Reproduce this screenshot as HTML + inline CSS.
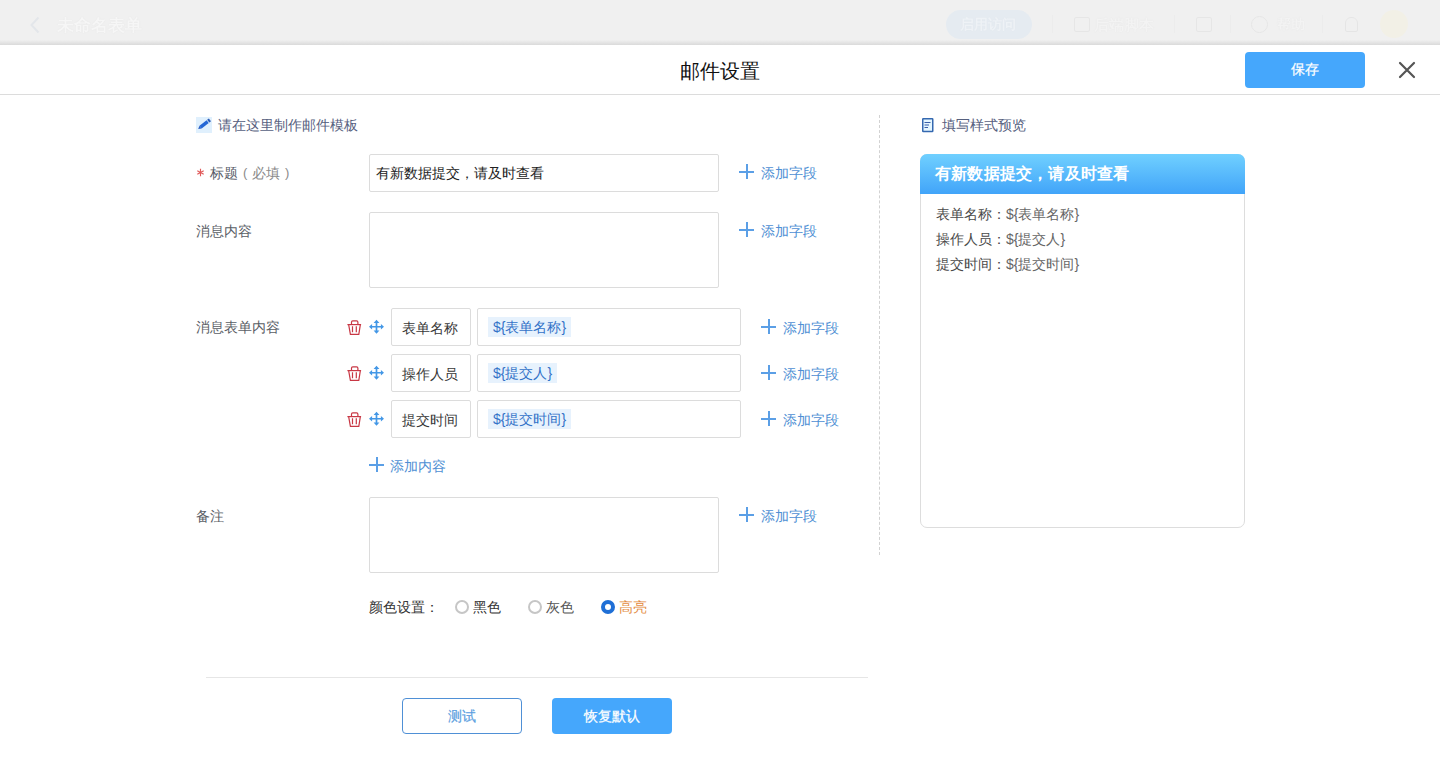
<!DOCTYPE html>
<html><head><meta charset="utf-8">
<style>
*{margin:0;padding:0;box-sizing:border-box}
html,body{width:1440px;height:757px;overflow:hidden;background:#fff;font-family:"Liberation Sans",sans-serif;font-size:14px;color:#333}
.abs{position:absolute}
#topbar{position:absolute;left:0;top:0;width:1440px;height:45px;background:linear-gradient(to bottom,#f0f0f0 0,#f0f0f0 40px,#dadada 45px)}
#hdr{position:absolute;left:0;top:45px;width:1440px;height:50px;background:#fff;border-bottom:1px solid #dcdcdc}
.title{position:absolute;left:0;width:1440px;top:59px;text-align:center;font-size:20px;line-height:24px;color:#111}
.btn-blue{position:absolute;background:#45a7fc;color:#fff;border-radius:4px;text-align:center;font-size:14px;-webkit-text-stroke:0.25px}
.lbl{position:absolute;font-size:14px;line-height:16px;color:#5a5e66}
.inp{position:absolute;border:1px solid #dcdcdc;border-radius:2px;background:#fff}
.add{position:absolute;font-size:14px;line-height:16px;color:#4f8fd4;white-space:nowrap}
.plus{position:absolute;width:15px;height:15px}
.plus:before{content:"";position:absolute;left:7px;top:0;width:2px;height:15px;background:#5b9fe6}
.plus:after{content:"";position:absolute;left:0;top:7px;width:15px;height:2px;background:#5b9fe6}
.tag{position:absolute;background:#e7f2fd;color:#3473c8;font-size:14px;line-height:20px;padding:0 5px;height:20px}
</style></head><body>
<div id="topbar"></div>
<div class="abs" style="left:0;top:0;width:1440px;height:40px;filter:blur(0.7px)">
 <svg class="abs" style="left:29px;top:16px" width="12" height="18" viewBox="0 0 12 18"><path d="M9.5 1.5L2.5 9L9.5 16.5" fill="none" stroke="#e3e6ea" stroke-width="2"/></svg>
 <div class="abs" style="left:57px;top:16px;font-size:17px;line-height:20px;font-weight:bold;color:#f6f6f6;text-shadow:0 0 1px #dedede">未命名表单</div>
 <div class="abs" style="left:946px;top:10px;width:86px;height:29px;border-radius:15px;background:#e5ebf1"></div>
 <div class="abs" style="left:960px;top:16px;font-size:14px;line-height:17px;font-weight:bold;color:#eef2f6;text-shadow:0 0 1px #dde3ea">启用访问</div>
 <div class="abs" style="left:1052px;top:15px;width:1px;height:18px;background:#ececec"></div>
 <div class="abs" style="left:1074px;top:17px;width:16px;height:15px;border:1.5px solid #e6e6e6;border-radius:2px"></div>
 <div class="abs" style="left:1094px;top:16px;font-size:15px;line-height:17px;font-weight:bold;color:#f3f3f3;text-shadow:0 0 1px #e0e0e0">后端脚本</div>
 <div class="abs" style="left:1174px;top:15px;width:1px;height:18px;background:#ececec"></div>
 <div class="abs" style="left:1196px;top:17px;width:16px;height:15px;border:1.5px solid #e6e6e6;border-radius:2px"></div>
 <div class="abs" style="left:1230px;top:15px;width:1px;height:18px;background:#ececec"></div>
 <div class="abs" style="left:1251px;top:16px;width:17px;height:17px;border:1.5px solid #e6e6e6;border-radius:50%"></div>
 <div class="abs" style="left:1277px;top:16px;font-size:14px;line-height:17px;font-weight:bold;color:#f3f3f3;text-shadow:0 0 1px #e0e0e0">帮助</div>
 <div class="abs" style="left:1322px;top:15px;width:1px;height:18px;background:#ececec"></div>
 <div class="abs" style="left:1345px;top:17px;width:13px;height:15px;border:1.5px solid #e5e5e5;border-radius:6px 6px 2px 2px"></div>
 <div class="abs" style="left:1380px;top:10px;width:28px;height:28px;border-radius:50%;background:#f2f0e6"></div>
</div>
<div id="hdr"></div>
<div class="title">邮件设置</div>
<div class="btn-blue" style="left:1245px;top:52px;width:120px;height:36px;line-height:35px">保存</div>
<svg class="abs" style="left:1398px;top:61px" width="18" height="18" viewBox="0 0 18 18"><path d="M2 2L16 16M16 2L2 16" stroke="#555" stroke-width="2.2" stroke-linecap="round"/></svg>

<!-- left header -->
<div class="abs" style="left:196px;top:117px;width:16px;height:16px;background:#e0f0fd"></div>
<svg class="abs" style="left:196px;top:117px" width="16" height="16" viewBox="0 0 16 16"><g transform="translate(2.2 12) rotate(-38)"><path d="M0 0L3 -1.75L3 1.75Z" fill="#2a5fc4"/><rect x="3" y="-1.75" width="9" height="3.5" fill="#2568d6"/><rect x="12.7" y="-1.75" width="2.2" height="3.5" fill="#2a5db8"/></g></svg>
<div class="lbl" style="left:218px;top:117px;color:#56607e">请在这里制作邮件模板</div>

<svg class="abs" style="left:196px;top:168px" width="9" height="9" viewBox="0 0 9 9"><path d="M4.5 0.8V8.2M1.3 2.65L7.7 6.35M1.3 6.35L7.7 2.65" stroke="#e05a5a" stroke-width="1.15"/></svg>
<div class="lbl" style="left:210px;top:165px;color:#555a66">标题</div>
<div class="lbl" style="left:243px;top:165px;color:#8a8a8a;font-size:13px">(</div>
<div class="lbl" style="left:252px;top:165px;color:#8a8a8a">必填</div>
<div class="lbl" style="left:285px;top:165px;color:#8a8a8a;font-size:13px">)</div>
<div class="inp" style="left:369px;top:154px;width:350px;height:38px"></div>
<div class="abs" style="left:376px;top:165px;font-size:14px;line-height:16px;color:#222">有新数据提交，请及时查看</div>
<div class="plus" style="left:739px;top:164px"></div><div class="add" style="left:761px;top:165px">添加字段</div>

<div class="lbl" style="left:196px;top:223px">消息内容</div>
<div class="inp" style="left:369px;top:212px;width:350px;height:76px"></div>
<div class="plus" style="left:739px;top:222px"></div><div class="add" style="left:761px;top:223px">添加字段</div>

<div class="lbl" style="left:196px;top:319px">消息表单内容</div>
<!-- rows -->
<svg class="abs" style="left:346px;top:320px" width="16" height="16" viewBox="0 0 16 16" fill="none" stroke="#c83744" stroke-width="1.2"><path d="M1.4 4.6H15.1"/><path d="M5.5 4.6V2.2Q5.5 0.9 6.8 0.9H10.6Q11.9 0.9 11.9 2.2V4.6"/><path d="M2.7 4.9L4.4 14.4H12.8L14.3 4.9"/><path d="M6.5 6.3V12.3M10.3 6.3V12.3"/></svg><svg class="abs" style="left:368px;top:319px" width="17" height="17" viewBox="0 0 17 17"><path d="M8.5 3V12.7M3.5 7.75H13.5" stroke="#4397e6" stroke-width="1.7"/><path d="M8.5 0.8L11.4 3.9H5.6Z M8.5 14.7L11.4 11.6H5.6Z M1 7.75L4.1 4.9V10.6Z M16 7.75L12.9 4.9V10.6Z" fill="#4397e6"/></svg>
<div class="inp" style="left:391px;top:308px;width:80px;height:38px"></div>
<div class="lbl" style="left:402px;top:320px;color:#383838">表单名称</div>
<div class="inp" style="left:477px;top:308px;width:264px;height:38px"></div>
<div class="tag" style="left:488px;top:317px">${表单名称}</div>
<div class="plus" style="left:761px;top:319px"></div><div class="add" style="left:783px;top:320px">添加字段</div>

<svg class="abs" style="left:346px;top:366px" width="16" height="16" viewBox="0 0 16 16" fill="none" stroke="#c83744" stroke-width="1.2"><path d="M1.4 4.6H15.1"/><path d="M5.5 4.6V2.2Q5.5 0.9 6.8 0.9H10.6Q11.9 0.9 11.9 2.2V4.6"/><path d="M2.7 4.9L4.4 14.4H12.8L14.3 4.9"/><path d="M6.5 6.3V12.3M10.3 6.3V12.3"/></svg><svg class="abs" style="left:368px;top:365px" width="17" height="17" viewBox="0 0 17 17"><path d="M8.5 3V12.7M3.5 7.75H13.5" stroke="#4397e6" stroke-width="1.7"/><path d="M8.5 0.8L11.4 3.9H5.6Z M8.5 14.7L11.4 11.6H5.6Z M1 7.75L4.1 4.9V10.6Z M16 7.75L12.9 4.9V10.6Z" fill="#4397e6"/></svg>
<div class="inp" style="left:391px;top:354px;width:80px;height:38px"></div>
<div class="lbl" style="left:402px;top:366px;color:#383838">操作人员</div>
<div class="inp" style="left:477px;top:354px;width:264px;height:38px"></div>
<div class="tag" style="left:488px;top:363px">${提交人}</div>
<div class="plus" style="left:761px;top:365px"></div><div class="add" style="left:783px;top:366px">添加字段</div>

<svg class="abs" style="left:346px;top:412px" width="16" height="16" viewBox="0 0 16 16" fill="none" stroke="#c83744" stroke-width="1.2"><path d="M1.4 4.6H15.1"/><path d="M5.5 4.6V2.2Q5.5 0.9 6.8 0.9H10.6Q11.9 0.9 11.9 2.2V4.6"/><path d="M2.7 4.9L4.4 14.4H12.8L14.3 4.9"/><path d="M6.5 6.3V12.3M10.3 6.3V12.3"/></svg><svg class="abs" style="left:368px;top:411px" width="17" height="17" viewBox="0 0 17 17"><path d="M8.5 3V12.7M3.5 7.75H13.5" stroke="#4397e6" stroke-width="1.7"/><path d="M8.5 0.8L11.4 3.9H5.6Z M8.5 14.7L11.4 11.6H5.6Z M1 7.75L4.1 4.9V10.6Z M16 7.75L12.9 4.9V10.6Z" fill="#4397e6"/></svg>
<div class="inp" style="left:391px;top:400px;width:80px;height:38px"></div>
<div class="lbl" style="left:402px;top:412px;color:#383838">提交时间</div>
<div class="inp" style="left:477px;top:400px;width:264px;height:38px"></div>
<div class="tag" style="left:488px;top:409px">${提交时间}</div>
<div class="plus" style="left:761px;top:411px"></div><div class="add" style="left:783px;top:412px">添加字段</div>

<div class="plus" style="left:369px;top:457px"></div><div class="add" style="left:390px;top:458px">添加内容</div>

<div class="lbl" style="left:196px;top:508px">备注</div>
<div class="inp" style="left:369px;top:497px;width:350px;height:76px"></div>
<div class="plus" style="left:739px;top:507px"></div><div class="add" style="left:761px;top:508px">添加字段</div>

<div class="lbl" style="left:369px;top:599px;color:#333">颜色设置：</div>
<div class="abs" style="left:455px;top:600px;width:14px;height:14px;border:2px solid #c6c6c6;border-radius:50%"></div>
<div class="lbl" style="left:473px;top:599px;color:#333">黑色</div>
<div class="abs" style="left:528px;top:600px;width:14px;height:14px;border:2px solid #c6c6c6;border-radius:50%"></div>
<div class="lbl" style="left:546px;top:599px;color:#555">灰色</div>
<div class="abs" style="left:601px;top:600px;width:14px;height:14px;border:4px solid #1f6fd6;border-radius:50%;background:#fff"></div>
<div class="lbl" style="left:619px;top:599px;color:#e38b3e">高亮</div>


<div class="abs" style="left:206px;top:677px;width:662px;height:1px;background:#e6e6e6"></div>
<div class="abs" style="left:402px;top:698px;width:120px;height:36px;border:1px solid #4f90d6;border-radius:4px;color:#5a9ee0;text-align:center;line-height:34px;-webkit-text-stroke:0.2px">测试</div>
<div class="btn-blue" style="left:552px;top:698px;width:120px;height:36px;line-height:36px">恢复默认</div>

<div class="abs" style="left:879px;top:115px;width:0;height:440px;border-left:1px dashed #d2d2d2"></div>

<!-- preview -->
<svg class="abs" style="left:921px;top:117px" width="14" height="16" viewBox="0 0 14 16"><rect x="1.75" y="1.75" width="10" height="12.75" rx="0.5" fill="#e4f6ff" stroke="#3468b0" stroke-width="1.5"/><path d="M3.5 5.5H9.5M3.5 8H8M3.5 10.5H7" stroke="#3a5fa8" stroke-width="1.1"/></svg>
<div class="lbl" style="left:942px;top:117px;color:#56607e">填写样式预览</div>
<div class="abs" style="left:920px;top:154px;width:325px;height:374px;border:1px solid #ddd;border-radius:7px"></div>
<div class="abs" style="left:920px;top:154px;width:325px;height:40px;border-radius:7px 7px 0 0;background:linear-gradient(#70d0ff,#41a4f9);color:#fff;font-weight:bold;font-size:16px;line-height:40px;padding-left:15px;letter-spacing:0.2px">有新数据提交，请及时查看</div>
<div class="abs" style="left:936px;top:202px;font-size:14px;line-height:25px;color:#4a4a4a">表单名称：<span style="color:#666">${表单名称}</span><br>操作人员：<span style="color:#666">${提交人}</span><br>提交时间：<span style="color:#666">${提交时间}</span></div>
</body></html>
